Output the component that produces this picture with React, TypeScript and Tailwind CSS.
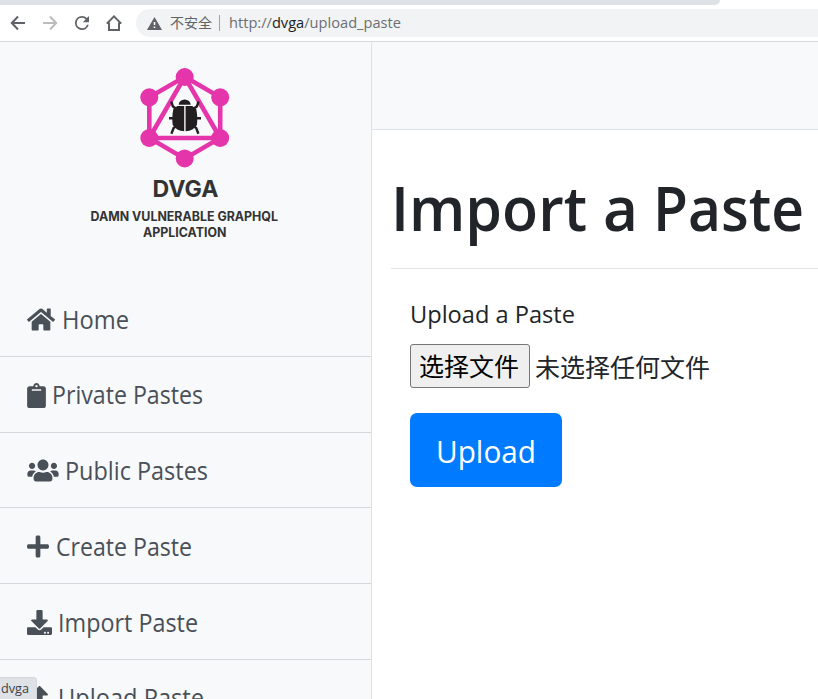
import type { ReactNode } from "react";
import { FaClipboard, FaDownload, FaHome, FaPlus, FaUpload, FaUsers } from "react-icons/fa";

function Fit({ width, size, children }: { width: number; size: number; children: string }) {
  return (
    <svg width={width} height={size * 1.4} className="block shrink-0 overflow-visible">
      <text x="0" y={size} fontSize={size} textLength={width} lengthAdjust="spacingAndGlyphs" fill="currentColor">
        {children}
      </text>
    </svg>
  );
}

function Toolbar() {
  return (
    <header className="h-[42px] shrink-0 border-b border-[#d9dadc] bg-white">
      <div className="h-[5px] w-[720px] rounded-br-[7px] bg-[#dee1e6]" />
      <div className="mt-1 flex h-7 items-center text-[#5f6368]">
        <svg viewBox="0 0 16 16" className="ml-[10px] size-4" fill="none" stroke="currentColor" strokeWidth="2">
          <path d="M15 8H2.5M8 1.5 1.8 8 8 14.5" />
        </svg>
        <svg viewBox="0 0 16 16" className="ml-4 size-4 text-[#babcbe]" fill="none" stroke="currentColor" strokeWidth="2">
          <path d="M1 8h12.5M8 1.5 14.2 8 8 14.5" />
        </svg>
        <svg viewBox="4 4 16 16" className="ml-[17px] size-[14px]" fill="currentColor">
          <path d="M17.65 6.35A7.96 7.96 0 0 0 12 4a8 8 0 1 0 7.73 10h-2.08A6 6 0 1 1 12 6c1.66 0 3.14.69 4.22 1.78L13 11h7V4z" />
        </svg>
        <svg viewBox="0 0 16 16" className="ml-[17px] size-4" fill="none" stroke="currentColor" strokeWidth="2">
          <path d="M.8 8.6 8 1.4l7.2 7.2M3 7.5V15h10V7.5" />
        </svg>
        <div className="ml-[14px] flex h-7 flex-1 items-center rounded-l-full bg-[#f1f3f4]">
          <svg viewBox="0 0 15 13" className="ml-[11px] h-[13px] w-[15px]">
            <path d="M7.5 0 15 13H0z" fill="#5f6368" />
            <path d="M6.7 5h1.6v3H6.7zM6.7 9.5h1.6V11H6.7z" fill="#fff" />
          </svg>
          <span className="-mt-[2px] ml-2 w-[43px] whitespace-nowrap font-['Noto_Sans_CJK_SC',sans-serif] text-[14px] leading-none">不安全</span>
          <span className="ml-[6px] h-4 w-px bg-[#9fa1a4]" />
          <svg width="172" height="22" className="ml-[9px] overflow-visible">
            <text x="0" y="16" fontSize="14.5" textLength="172" lengthAdjust="spacingAndGlyphs" fill="#6b6f73">
              http://<tspan fill="#202124">dvga</tspan>/upload_paste
            </text>
          </svg>
        </div>
      </div>
    </header>
  );
}

function Logo() {
  return (
    <svg viewBox="80 60 210 185" className="ml-20 mt-[18px] h-[185px] w-[210px] shrink-0">
      <g fill="none" stroke="#e535ab" strokeWidth="4.6">
        <path d="M184.7 76.8 220.2 97.3V138L184.7 158.7 149.3 138V97.3z" />
        <path d="M184.7 76.8 220.2 138H149.3z" />
      </g>
      <g fill="#e535ab">
        <circle cx="184.7" cy="77" r="9" />
        <circle cx="220.2" cy="97.3" r="9" />
        <circle cx="220.2" cy="138" r="9" />
        <circle cx="184.7" cy="158.4" r="9" />
        <circle cx="149.3" cy="138" r="9" />
        <circle cx="149.3" cy="97.3" r="9" />
      </g>
      <g fill="#231f20">
        <path d="M178.7 104.8a6 5.2 0 0 1 12 0z" />
        <path d="M184.2 106h-6.8l-4 2.7c-1.2 6-1.4 11-.7 16.3 2.4 3.8 6.2 6 11.5 6.2zM185.6 106h6.6l4 2.7c1.2 6 1.4 11 .7 16.3-2.4 3.8-6 6-11.3 6.2z" />
      </g>
      <path d="M171.2 101.5l1.7 5 4 2.6M198.6 101.5l-1.7 5-4 2.6M169 118.3h5M201 118.3h-5M171.4 133.7l2.2-5.6 3.4-2.5M198.4 133.7l-2.2-5.6-3.4-2.5" fill="none" stroke="#231f20" strokeWidth="2.4" />
      <g fill="#333" className="font-['Inter',sans-serif]">
        <text x="152.5" y="197" fontSize="23" fontWeight="700" textLength="66" lengthAdjust="spacingAndGlyphs">DVGA</text>
        <g fontWeight="700" fontSize="13">
          <text x="90.5" y="220.8" textLength="187.5" lengthAdjust="spacingAndGlyphs">DAMN VULNERABLE GRAPHQL</text>
          <text x="143" y="236.8" textLength="83.5" lengthAdjust="spacingAndGlyphs">APPLICATION</text>
        </g>
      </g>
    </svg>
  );
}

function Item({ icon, gap, label, width }: { icon: ReactNode; gap: number; label: string; width: number }) {
  return (
    <li className="flex h-[75.75px] shrink-0 items-center border-b border-[#d5d7da] pl-[27px] pt-[3px]">
      {icon}
      <div className="pt-[2px]" style={{ marginLeft: gap }}>
        <Fit width={width} size={24.6}>{label}</Fit>
      </div>
    </li>
  );
}

export default function App() {
  return (
    <div className="relative flex h-[699px] w-[818px] flex-col overflow-hidden bg-white font-['Open_Sans','Noto_Sans_CJK_SC',sans-serif]">
      <Toolbar />
      <div className="flex min-h-0 flex-1">
        <aside className="flex w-[372px] shrink-0 flex-col overflow-hidden border-r border-[#dee2e6] bg-[#f8f9fb] text-[#495057]">
          <Logo />
          <ul className="mt-9 flex flex-col">
            <Item icon={<FaHome className="h-[25px] w-[28px]" preserveAspectRatio="none" />} gap={7} label="Home" width={67} />
            <Item icon={<FaClipboard className="mb-px h-[25px] w-[19px]" />} gap={6} label="Private Pastes" width={151} />
            <Item icon={<FaUsers className="mb-px h-[25px] w-[32px]" />} gap={6} label="Public Pastes" width={143} />
            <Item icon={<FaPlus className="mb-px h-[25px] w-[22px]" />} gap={7} label="Create Paste" width={136} />
            <Item icon={<FaDownload className="size-[25px]" />} gap={6} label="Import Paste" width={140} />
            <Item icon={<FaUpload className="mb-px size-[25px]" />} gap={6} label="Upload Paste" width={146} />
          </ul>
        </aside>
        <main className="flex min-w-0 flex-1 flex-col">
          <div className="h-[88px] shrink-0 border-b border-[#dee2e6] bg-[#f8f9fb]" />
          <div className="ml-[19px] h-[139px] border-b border-[#e2e3e4] pt-[39px] text-[#212529]">
            <svg width="420" height="86" className="block overflow-visible">
              <text y="62" fontSize="61" fontWeight="600" fill="currentColor">
                <tspan x="0" textLength="196" lengthAdjust="spacingAndGlyphs">Import</tspan>{" "}
                <tspan x="212" textLength="35" lengthAdjust="spacingAndGlyphs">a</tspan>{" "}
                <tspan x="262" textLength="151" lengthAdjust="spacingAndGlyphs">Paste</tspan>
              </text>
            </svg>
          </div>
          <div className="ml-[38px] mt-[29px] text-[#212529]">
            <Fit width={165} size={24.5}>Upload a Paste</Fit>
            <div className="mt-[11.7px] flex h-11 items-center font-['Noto_Sans_CJK_SC',sans-serif] text-[25px] leading-none">
              <button className="h-11 w-[120px] rounded-[3px] border border-[#767676] bg-[#efefef] pr-[2px] text-black">选择文件</button>
              <span className="ml-[5px] pt-px">未选择任何文件</span>
            </div>
            <button className="mt-[25px] flex h-[74px] w-[152px] items-center rounded-[7px] bg-[#007bff] pl-[26px] pt-[6px] text-white">
              <Fit width={100} size={30.5}>Upload</Fit>
            </button>
          </div>
        </main>
      </div>
      <div className="absolute bottom-0 left-0 flex h-[22px] w-[37px] items-center rounded-tr-[4px] border-r border-t border-[#d3d6da] bg-[#dee1e6] pl-px text-[#3c4043]">
        <Fit width={28} size={12.5}>dvga</Fit>
      </div>
    </div>
  );
}
